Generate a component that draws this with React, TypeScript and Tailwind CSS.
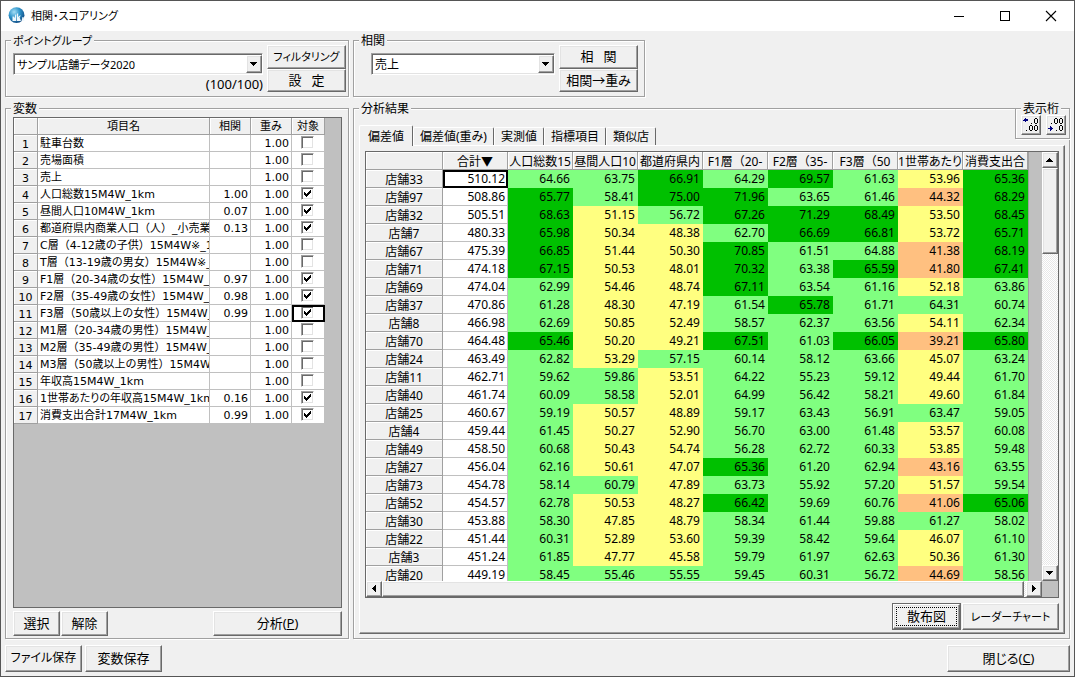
import { useState } from "react";
import type { ReactNode } from "react";

const raised =
  "border border-t-white border-l-white border-r-[#696969] border-b-[#696969] bg-[#f0f0f0] shadow-[inset_-1px_-1px_0_#a0a0a0,inset_1px_1px_0_#e3e3e3]";
const sunken =
  "border border-t-[#a0a0a0] border-l-[#a0a0a0] border-r-white border-b-white shadow-[inset_1px_1px_0_#696969,inset_-1px_-1px_0_#e3e3e3]";
const headCell =
  "overflow-hidden whitespace-nowrap border-r border-b border-[#a0a0a0] bg-[#f0f0f0] p-0 text-center font-normal shadow-[inset_1px_1px_0_#ffffff]";
const variableCell =
  "overflow-hidden whitespace-nowrap border-r border-b border-[#c0c0c0] bg-white p-0 pt-[2px]";

type Variable = { name: string; corr: string; on: boolean };

const variables: Variable[] = [
  { name: "駐車台数", corr: "", on: false },
  { name: "売場面積", corr: "", on: false },
  { name: "売上", corr: "", on: false },
  { name: "人口総数15M4W_1km", corr: "1.00", on: true },
  { name: "昼間人口10M4W_1km", corr: "0.07", on: true },
  { name: "都道府県内商業人口（人）_小売業", corr: "0.13", on: true },
  { name: "C層（4-12歳の子供）15M4W※_1km", corr: "", on: false },
  { name: "T層（13-19歳の男女）15M4W※_1km", corr: "", on: false },
  { name: "F1層（20-34歳の女性）15M4W_1km", corr: "0.97", on: true },
  { name: "F2層（35-49歳の女性）15M4W_1km", corr: "0.98", on: true },
  { name: "F3層（50歳以上の女性）15M4W_1km", corr: "0.99", on: true },
  { name: "M1層（20-34歳の男性）15M4W_1km", corr: "", on: false },
  { name: "M2層（35-49歳の男性）15M4W_1km", corr: "", on: false },
  { name: "M3層（50歳以上の男性）15M4W_1km", corr: "", on: false },
  { name: "年収高15M4W_1km", corr: "", on: false },
  { name: "1世帯あたりの年収高15M4W_1km", corr: "0.16", on: true },
  { name: "消費支出合計17M4W_1km", corr: "0.99", on: true },
];

const resultHeads = [
  "人口総数15",
  "昼間人口10",
  "都道府県内",
  "F1層（20-",
  "F2層（35-",
  "F3層（50",
  "1世帯あたり",
  "消費支出合",
];

const results = `店舗33 510.12 64.66 63.75 66.91 64.29 69.57 61.63 53.96 65.36
店舗97 508.86 65.77 58.41 75.00 71.96 63.65 61.46 44.32 68.29
店舗32 505.51 68.63 51.15 56.72 67.26 71.29 68.49 53.50 68.45
店舗7 480.33 65.98 50.34 48.38 62.70 66.69 66.81 53.72 65.71
店舗67 475.39 66.85 51.44 50.30 70.85 61.51 64.88 41.38 68.19
店舗71 474.18 67.15 50.53 48.01 70.32 63.38 65.59 41.80 67.41
店舗69 474.04 62.99 54.46 48.74 67.11 63.54 61.16 52.18 63.86
店舗37 470.86 61.28 48.30 47.19 61.54 65.78 61.71 64.31 60.74
店舗8 466.98 62.69 50.85 52.49 58.57 62.37 63.56 54.11 62.34
店舗70 464.48 65.46 50.20 49.21 67.51 61.03 66.05 39.21 65.80
店舗24 463.49 62.82 53.29 57.15 60.14 58.12 63.66 45.07 63.24
店舗11 462.71 59.62 59.86 53.51 64.22 55.23 59.12 49.44 61.70
店舗40 461.74 60.09 58.58 52.01 64.99 56.42 58.21 49.60 61.84
店舗25 460.67 59.19 50.57 48.89 59.17 63.43 56.91 63.47 59.05
店舗4 459.44 61.45 50.27 52.90 56.70 63.00 61.48 53.57 60.08
店舗49 458.50 60.68 50.43 54.74 56.28 62.72 60.33 53.85 59.48
店舗27 456.04 62.16 50.61 47.07 65.36 61.20 62.94 43.16 63.55
店舗73 454.78 58.14 60.79 47.89 63.73 55.92 57.20 51.57 59.54
店舗52 454.57 62.78 50.53 48.27 66.42 59.69 60.76 41.06 65.06
店舗30 453.88 58.30 47.85 48.79 58.34 61.44 59.88 61.27 58.02
店舗22 451.44 60.31 52.89 53.60 59.39 58.42 59.64 46.07 61.10
店舗3 451.24 61.85 47.77 45.58 59.79 61.97 62.63 50.36 61.30
店舗20 449.19 58.45 55.46 55.55 59.45 60.31 56.72 44.69 58.56`
  .split("\n")
  .map((line) => line.split(" "));

function heat(value: string) {
  const n = Number(value);
  if (n >= 65) return "bg-[#00c000]";
  if (n >= 55) return "bg-[#80ff80]";
  if (n >= 45) return "bg-[#ffff80]";
  return "bg-[#ffc080]";
}

function Group({
  title,
  className,
  legendClass = "",
  children,
}: {
  title: string;
  className: string;
  legendClass?: string;
  children: ReactNode;
}) {
  return (
    <fieldset
      className={
        "min-w-0 border border-[#a0a0a0] shadow-[1px_1px_0_#ffffff,inset_1px_1px_0_#ffffff] " +
        className
      }
    >
      <legend className={"ml-[5px] h-[9px] bg-[#f0f0f0] px-[2px] leading-[9px] " + legendClass}>
        {title}
      </legend>
      {children}
    </fieldset>
  );
}

function Button({
  className,
  size = "text-[13px]",
  children,
}: {
  className: string;
  size?: string;
  children: ReactNode;
}) {
  return (
    <button
      type="button"
      className={"shrink-0 whitespace-nowrap pb-px leading-none " + size + " " + raised + " " + className}
    >
      {children}
    </button>
  );
}

function Arrow({ points }: { points: string }) {
  return (
    <svg viewBox="0 0 8 8" className="size-2" shapeRendering="crispEdges" aria-hidden="true">
      <polygon points={points} fill="#000" />
    </svg>
  );
}

const down = "0,2 7,2 3.5,6";
const up = "0,6 7,6 3.5,2";
const left = "2,3.5 6,0 6,7";
const right = "6,3.5 2,0 2,7";

function Combo({ label, value, className }: { label: string; value: string; className: string }) {
  return (
    <div className={"grid h-[22px] shrink-0 bg-white " + sunken + " " + className}>
      <select
        aria-label={label}
        defaultValue={value}
        className="col-start-1 row-start-1 w-full appearance-none bg-transparent pt-px pl-[3px] leading-[19px] outline-none"
      >
        <option>{value}</option>
      </select>
      <span
        className={
          "pointer-events-none col-start-1 row-start-1 my-px flex w-4 items-center justify-center justify-self-end " +
          raised
        }
      >
        <Arrow points={down} />
      </span>
    </div>
  );
}

function VariableTable() {
  const [checked, setChecked] = useState(variables.map((v) => v.on));
  return (
    <table className="w-[311px] table-fixed border-separate border-spacing-0 font-['DejaVu_Sans','Noto_Sans_CJK_JP',sans-serif] text-[11px] leading-[14px]">
      <colgroup>
        <col className="w-6" />
        <col className="w-[172px]" />
        <col className="w-[41px]" />
        <col className="w-[41px]" />
        <col className="w-[33px]" />
      </colgroup>
      <thead>
        <tr className="h-[17px]">
          <th className={headCell} />
          {["項目名", "相関", "重み", "対象"].map((h) => (
            <th key={h} className={headCell + " pt-[2px]"}>
              {h}
            </th>
          ))}
        </tr>
      </thead>
      <tbody>
        {variables.map((v, i) => (
          <tr key={v.name} className="h-[17px]">
            <th className={headCell + " pt-[3px] leading-[13px]"}>{i + 1}</th>
            <td
              className={
                variableCell +
                " pl-[2px]" +
                (v.name.includes("（") ? "" : " [font-feature-settings:'palt']")
              }
            >
              {v.name}
            </td>
            <td className={variableCell + " pr-[2px] text-right"}>{v.corr}</td>
            <td className={variableCell + " pr-[2px] text-right"}>1.00</td>
            <td
              className={
                "border-r border-b border-[#c0c0c0] bg-white p-0 pb-[2px]" +
                (i === 10 ? " outline-2 -outline-offset-2 outline-black" : "")
              }
            >
              <label className="ml-[9px] grid size-[13px]">
                <input
                  type="checkbox"
                  aria-label={v.name}
                  checked={checked[i]}
                  onChange={() => setChecked(checked.map((c, j) => (j === i ? !c : c)))}
                  className={
                    "peer col-start-1 row-start-1 size-[13px] appearance-none bg-white " + sunken
                  }
                />
                <svg
                  viewBox="0 0 13 13"
                  className="pointer-events-none col-start-1 row-start-1 hidden size-[13px] peer-checked:block"
                  shapeRendering="crispEdges"
                  aria-hidden="true"
                >
                  <path
                    d="M3 5h1v3h-1zM4 6h1v3h-1zM5 7h1v3h-1zM6 6h1v3h-1zM7 5h1v3h-1zM8 4h1v3h-1zM9 3h1v3h-1z"
                    fill="#000"
                  />
                </svg>
              </label>
            </td>
          </tr>
        ))}
      </tbody>
    </table>
  );
}

function ResultTable() {
  return (
    <table className="w-[662px] table-fixed border-separate border-spacing-0 border-r border-[#a0a0a0] leading-[17px]">
      <colgroup>
        <col className="w-[77px]" />
        <col className="w-[65px]" />
        {resultHeads.map((h) => (
          <col key={h} className="w-[65px]" />
        ))}
      </colgroup>
      <thead>
        <tr className="h-[18px]">
          <th className={headCell} />
          <th className={headCell + " pt-[2px] leading-[15px]"}>合計▼</th>
          {resultHeads.map((h) => (
            <th
              key={h}
              className={
                headCell +
                " pt-[2px] leading-[15px]" +
                (h.includes("（") ? " [font-feature-settings:normal]" : "")
              }
            >
              {h}
            </th>
          ))}
        </tr>
      </thead>
      <tbody>
        {results.map(([shop, total, ...scores], i) => (
          <tr key={shop} className="h-[18px]">
            <th className={headCell + " pt-[2px] leading-[15px]"}>{shop}</th>
            <td
              className={
                "border-r border-b border-[#c0c0c0] bg-white p-0 pr-[2px] text-right" +
                (i === 0 ? " outline-2 -outline-offset-2 outline-black" : "")
              }
            >
              {total}
            </td>
            {scores.map((s, j) => (
              <td key={j} className={"p-0 pr-[3px] pb-px text-right " + heat(s)}>
                {s}
              </td>
            ))}
          </tr>
        ))}
      </tbody>
    </table>
  );
}

const dither =
  "bg-[repeating-conic-gradient(#ffffff_0_25%,#e8e8e8_0_50%)] bg-[length:2px_2px]";

function ScrollButton({ label, points }: { label: string; points: string }) {
  return (
    <button
      type="button"
      aria-label={label}
      className={"flex size-4 shrink-0 items-center justify-center " + raised}
    >
      <Arrow points={points} />
    </button>
  );
}

const zero = "h2v1h1v4h-1v1h-2v-1h-1v-4h1zm0 1v4h2v-4z";

function DigitIcon({ more }: { more: boolean }) {
  return (
    <svg viewBox="0 0 18 18" className="size-[18px]" shapeRendering="crispEdges" aria-hidden="true">
      <path
        d={
          more
            ? "M1 4h1v-1h1v-1h1v1h2v2h-2v1h-1v-1h-2z"
            : "M1 12h2v-2h1v1h1v1h1v1h-1v1h-1v1h-1v-2h-2z"
        }
        fill="#000080"
      />
      {(more ? ["M13 2", "M8 9", "M13 9"] : ["M8 2", "M13 2", "M13 9"]).map((at) => (
        <path key={at} d={at + zero} fillRule="evenodd" fill="#000" />
      ))}
      <path d={more ? "M9 7h1v1H9zM4 14h1v1H4z" : "M4 7h1v1H4zM9 14h1v1H9z"} fill="#000" />
    </svg>
  );
}

const tabs = ["偏差値", "偏差値(重み)", "実測値", "指標項目", "類似店"];

export default function App() {
  return (
    <div className="flex h-screen min-h-[400px] flex-col border border-[#555555] bg-[#f0f0f0] font-['Noto_Sans','Noto_Sans_CJK_JP',sans-serif] text-[12px] leading-4 text-black">
      <header className="flex h-[30px] shrink-0 items-center bg-white pl-[7px]">
        <svg viewBox="0 0 18 18" className="size-[18px]" aria-hidden="true">
          <defs>
            <radialGradient id="globe" cx="0.35" cy="0.3" r="0.8">
              <stop offset="0" stopColor="#a5def5" />
              <stop offset="0.45" stopColor="#2f95cb" />
              <stop offset="1" stopColor="#0b3f78" />
            </radialGradient>
          </defs>
          <circle cx="8.5" cy="8.2" r="7.9" fill="url(#globe)" />
          <path
            d="M4.5 14V9.5h1.2l.8 1.5.8-3.5h1V14zM9 14V6.5h1.2V10l1.6-1.5h1L11.600 10.500 13 14zM13.500 14l1-4h1l1 4z"
            fill="#eef7fc"
          />
        </svg>
        <h1 className="ml-[5px] flex-1 text-[11px] [font-feature-settings:'palt']">
          相関・スコアリング
        </h1>
        <button type="button" aria-label="最小化" className="flex h-full w-[46px] items-center justify-center">
          <svg viewBox="0 0 12 12" className="size-3" shapeRendering="crispEdges" aria-hidden="true">
            <path d="M1 6h10v1H1z" />
          </svg>
        </button>
        <button type="button" aria-label="最大化" className="flex h-full w-[46px] items-center justify-center">
          <svg viewBox="0 0 12 12" className="size-3" shapeRendering="crispEdges" aria-hidden="true">
            <path d="M1.5 1.5h9v9h-9z" fill="none" stroke="#000" />
          </svg>
        </button>
        <button type="button" aria-label="閉じる" className="flex h-full w-[46px] items-center justify-center">
          <svg viewBox="0 0 12 12" className="size-3" aria-hidden="true">
            <path d="M1 1l10 10M11 1L1 11" fill="none" stroke="#000" strokeWidth="1.1" />
          </svg>
        </button>
      </header>

      <main className="flex min-h-0 flex-1 flex-col px-1 pt-[5px] pb-1 [font-feature-settings:'palt']">
        <div className="flex shrink-0 gap-1">
          <Group title="ポイントグループ" legendClass="text-[11px]" className="w-[344px] shrink-0">
            <div className="flex gap-1 pr-[2px] pb-1 pl-[7px]">
              <div className="flex w-[250px] flex-col pt-2">
                <Combo
                  label="ポイントグループ"
                  value="サンプル店舗データ2020"
                  className="w-[250px] text-[11px]"
                />
                <output className="mt-px text-right text-[13px]">(100/100)</output>
              </div>
              <div className="flex w-[79px] flex-col">
                <Button className="h-6" size="text-[11px]">
                  フィルタリング
                </Button>
                <Button className="h-[23px]">設{"\u00a0\u00a0\u00a0"}定</Button>
              </div>
            </div>
          </Group>
          <Group title="相関" className="shrink-0">
            <div className="flex gap-1 pr-[6px] pb-1 pl-[17px]">
              <div className="pt-2">
                <Combo label="相関" value="売上" className="w-[184px]" />
              </div>
              <div className="flex w-[79px] flex-col">
                <Button className="h-6">相{"\u00a0\u00a0\u00a0"}関</Button>
                <Button className="h-[23px]">相関→重み</Button>
              </div>
            </div>
          </Group>
        </div>

        <div className="mt-[7px] flex min-h-0 flex-1 gap-1">
          <Group title="変数" className="flex w-[344px] shrink-0 flex-col">
            <div className="mt-1 mr-[6px] ml-[7px] min-h-0 flex-1 overflow-hidden border border-[#696969] bg-[#c0c0c0] [font-feature-settings:normal]">
              <VariableTable />
            </div>
            <div className="mt-[3px] mr-[6px] mb-[2px] ml-[7px] flex shrink-0 gap-px">
              <Button className="h-[25px] w-[47px]">選択</Button>
              <Button className="h-[25px] w-[47px]">解除</Button>
              <Button className="ml-auto h-[25px] w-[129px]">
                分析(<u>P</u>)
              </Button>
            </div>
          </Group>

          <div className="relative flex min-w-0 flex-1">
            <Group title="分析結果" className="flex flex-1 flex-col">
              <div role="tablist" className="mt-3 ml-[5px] flex shrink-0 items-end">
                {tabs.map((t, i) => (
                  <button
                    key={t}
                    type="button"
                    role="tab"
                    aria-selected={i === 0}
                    className={
                      i === 0
                        ? "z-10 -mb-px h-[21px] rounded-t-xs border border-b-0 border-t-white border-r-[#696969] border-l-white bg-[#f0f0f0] px-2 pt-px"
                        : "h-[18px] rounded-t-xs border border-b-0 border-t-white border-r-[#696969] border-l-white px-[6px] pt-px"
                    }
                  >
                    {t}
                  </button>
                ))}
              </div>
              <div className="mr-1 mb-1 ml-[5px] flex min-h-0 flex-1 flex-col border border-t-white border-r-[#696969] border-b-[#696969] border-l-white px-[5px] pt-[5px] pb-[3px] shadow-[inset_-1px_-1px_0_#a0a0a0]">
                <div className="flex min-h-0 flex-1 flex-col border border-[#696969] bg-[#c0c0c0]">
                  <div className="flex min-h-0 flex-1">
                    <div className="min-w-0 flex-1 overflow-hidden">
                      <ResultTable />
                    </div>
                    <div className={"flex w-4 shrink-0 flex-col " + dither}>
                      <ScrollButton label="上へ" points={up} />
                      <div className={"h-[86px] " + raised} />
                      <div className="flex-1" />
                      <ScrollButton label="下へ" points={down} />
                    </div>
                  </div>
                  <div className="flex h-4 shrink-0">
                    <ScrollButton label="左へ" points={left} />
                    <div className={"flex-1 " + raised} />
                    <div className={"w-[2px] " + dither} />
                    <ScrollButton label="右へ" points={right} />
                    <div className="w-4 shrink-0" />
                  </div>
                </div>
                <div className="mt-[5px] flex shrink-0 justify-end gap-px">
                  <button type="button" className="h-[27px] w-[69px] border border-[#696969]">
                    <span
                      className={
                        "flex h-full items-center justify-center p-[2px] text-[13px] leading-none " +
                        raised
                      }
                    >
                      <span className="flex size-full items-center justify-center border border-dotted border-black">
                        散布図
                      </span>
                    </span>
                  </button>
                  <Button className="h-[27px] w-[97px]" size="text-[11px]">
                    レーダーチャート
                  </Button>
                </div>
              </div>
            </Group>
            <div className="absolute top-0 right-0 bg-[#f0f0f0]">
              <Group title="表示桁" className="w-[55px]">
                <div className="flex justify-between pt-[2px] pr-[3px] pb-[3px] pl-[5px]">
                  <button type="button" aria-label="桁数を増やす" className={"size-5 " + raised}>
                    <DigitIcon more />
                  </button>
                  <button type="button" aria-label="桁数を減らす" className={"size-5 " + raised}>
                    <DigitIcon more={false} />
                  </button>
                </div>
              </Group>
            </div>
          </div>
        </div>

        <footer className="mt-[6px] flex shrink-0 gap-[3px]">
          <Button className="h-[27px] w-[77px]" size="text-[12px]">
            ファイル保存
          </Button>
          <Button className="h-[27px] w-[77px]">変数保存</Button>
          <Button className="ml-auto h-[27px] w-[123px]">
            閉じる(<u>C</u>)
          </Button>
        </footer>
      </main>
    </div>
  );
}
